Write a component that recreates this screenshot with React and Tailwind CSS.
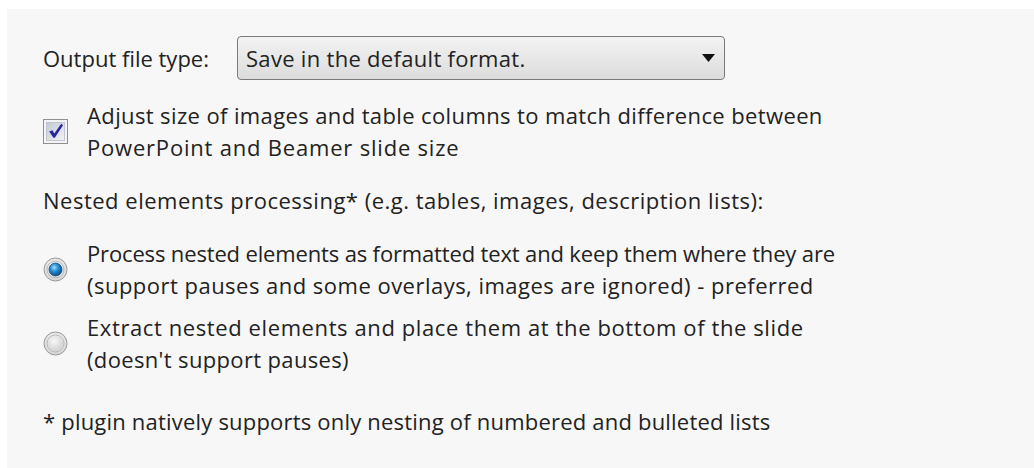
import { useState } from "react";

const font = { fontFamily: '"Segoe UI", "Open Sans", "Noto Sans", sans-serif' };

function CheckBox({ checked, onChange }) {
  return (
    <button
      type="button"
      onClick={() => onChange(!checked)}
      className="h-[25px] w-[25px] shrink-0 border border-[#8f8f8f] bg-[#f4f4f4] p-[2px]"
    >
      <span className="flex h-full w-full items-center justify-center border border-[#c2c6d0] bg-gradient-to-br from-[#c4c9d4] to-[#f1f2f5]">
        {checked && (
          <svg width="16" height="16" viewBox="0 0 16 16">
            <path
              d="M1.2 8.6 L4.4 7.2 L6.3 10.6 L13.2 0.8 L15 2.2 L6.8 14.8 L5.4 14.8 Z"
              fill="#26269a"
            />
          </svg>
        )}
      </span>
    </button>
  );
}

function Radio({ checked, onClick }) {
  return (
    <button type="button" onClick={onClick} className="shrink-0">
      <svg width="25" height="25" viewBox="0 0 25 25">
        <defs>
          <radialGradient id="ring" cx="50%" cy="40%" r="60%">
            <stop offset="0%" stopColor="#ffffff" />
            <stop offset="100%" stopColor="#d4d4d4" />
          </radialGradient>
          <radialGradient id="dot" cx="40%" cy="35%" r="65%">
            <stop offset="0%" stopColor="#9fe0ff" />
            <stop offset="45%" stopColor="#2a8fd4" />
            <stop offset="100%" stopColor="#0d4f8a" />
          </radialGradient>
          <radialGradient id="empty" cx="40%" cy="35%" r="70%">
            <stop offset="0%" stopColor="#f8f8f8" />
            <stop offset="100%" stopColor="#cfcfcf" />
          </radialGradient>
        </defs>
        <circle cx="12.5" cy="12.5" r="11.5" fill="url(#ring)" stroke="#9a9a9a" strokeWidth="1" />
        <circle cx="12.5" cy="12.5" r="8.5" fill="none" stroke="#b8b8b8" strokeWidth="1" />
        {checked ? (
          <circle cx="12.5" cy="12.5" r="6.5" fill="url(#dot)" stroke="#1c4f7a" strokeWidth="0.8" />
        ) : (
          <circle cx="12.5" cy="12.5" r="7.5" fill="url(#empty)" />
        )}
      </svg>
    </button>
  );
}

export default function App() {
  const [adjust, setAdjust] = useState(true);
  const [nested, setNested] = useState("inline");

  return (
    <div className="min-h-[468px] bg-white pl-[7px] pt-[9px]" style={font}>
      <div className="h-[459px] bg-[#f7f7f7] pl-[36px] pt-[27px] text-[22px] leading-[32px] tracking-[0.3px] text-[#222]">
        {/* output format */}
        <div className="flex items-center">
          <span className="w-[194px] tracking-normal">Output file type:</span>
          <button
            type="button"
            className="flex h-[44px] w-[488px] items-center justify-between rounded-[4px] border border-[#7a7a7a] bg-gradient-to-b from-[#f3f3f3] to-[#dcdcdc] pl-[8px] pr-[9px] text-left"
          >
            <span>Save in the default format.</span>
            <svg width="13" height="8" viewBox="0 0 13 8">
              <path d="M0 0 H13 L6.5 8 Z" fill="#111" />
            </svg>
          </button>
        </div>

        {/* slide size option */}
        <div className="mt-[19px] flex items-center gap-[19px]">
          <CheckBox checked={adjust} onChange={setAdjust} />
          <div>
            <div className="tracking-[0.38px]">
              Adjust size of images and table columns to match difference between
            </div>
            <div className="tracking-[0.8px]">PowerPoint and Beamer slide size</div>
          </div>
        </div>

        <div className="mt-[21px] tracking-[0.5px]">
          Nested elements processing* (e.g. tables, images, description lists):
        </div>

        <div className="mt-[21px] flex items-center gap-[19px]">
          <Radio checked={nested === "inline"} onClick={() => setNested("inline")} />
          <div>
            <div className="tracking-[-0.15px]">
              Process nested elements as formatted text and keep them where they are
            </div>
            <div className="tracking-[0.48px]">
              (support pauses and some overlays, images are ignored) - preferred
            </div>
          </div>
        </div>

        <div className="mt-[10px] flex items-center gap-[19px]">
          <Radio checked={nested === "bottom"} onClick={() => setNested("bottom")} />
          <div>
            <div className="tracking-[0.6px]">
              Extract nested elements and place them at the bottom of the slide
            </div>
            <div className="tracking-[0.35px]">(doesn't support pauses)</div>
          </div>
        </div>

        <div className="mt-[30px] tracking-[0.2px]">
          * plugin natively supports only nesting of numbered and bulleted lists
        </div>
      </div>
    </div>
  );
}
